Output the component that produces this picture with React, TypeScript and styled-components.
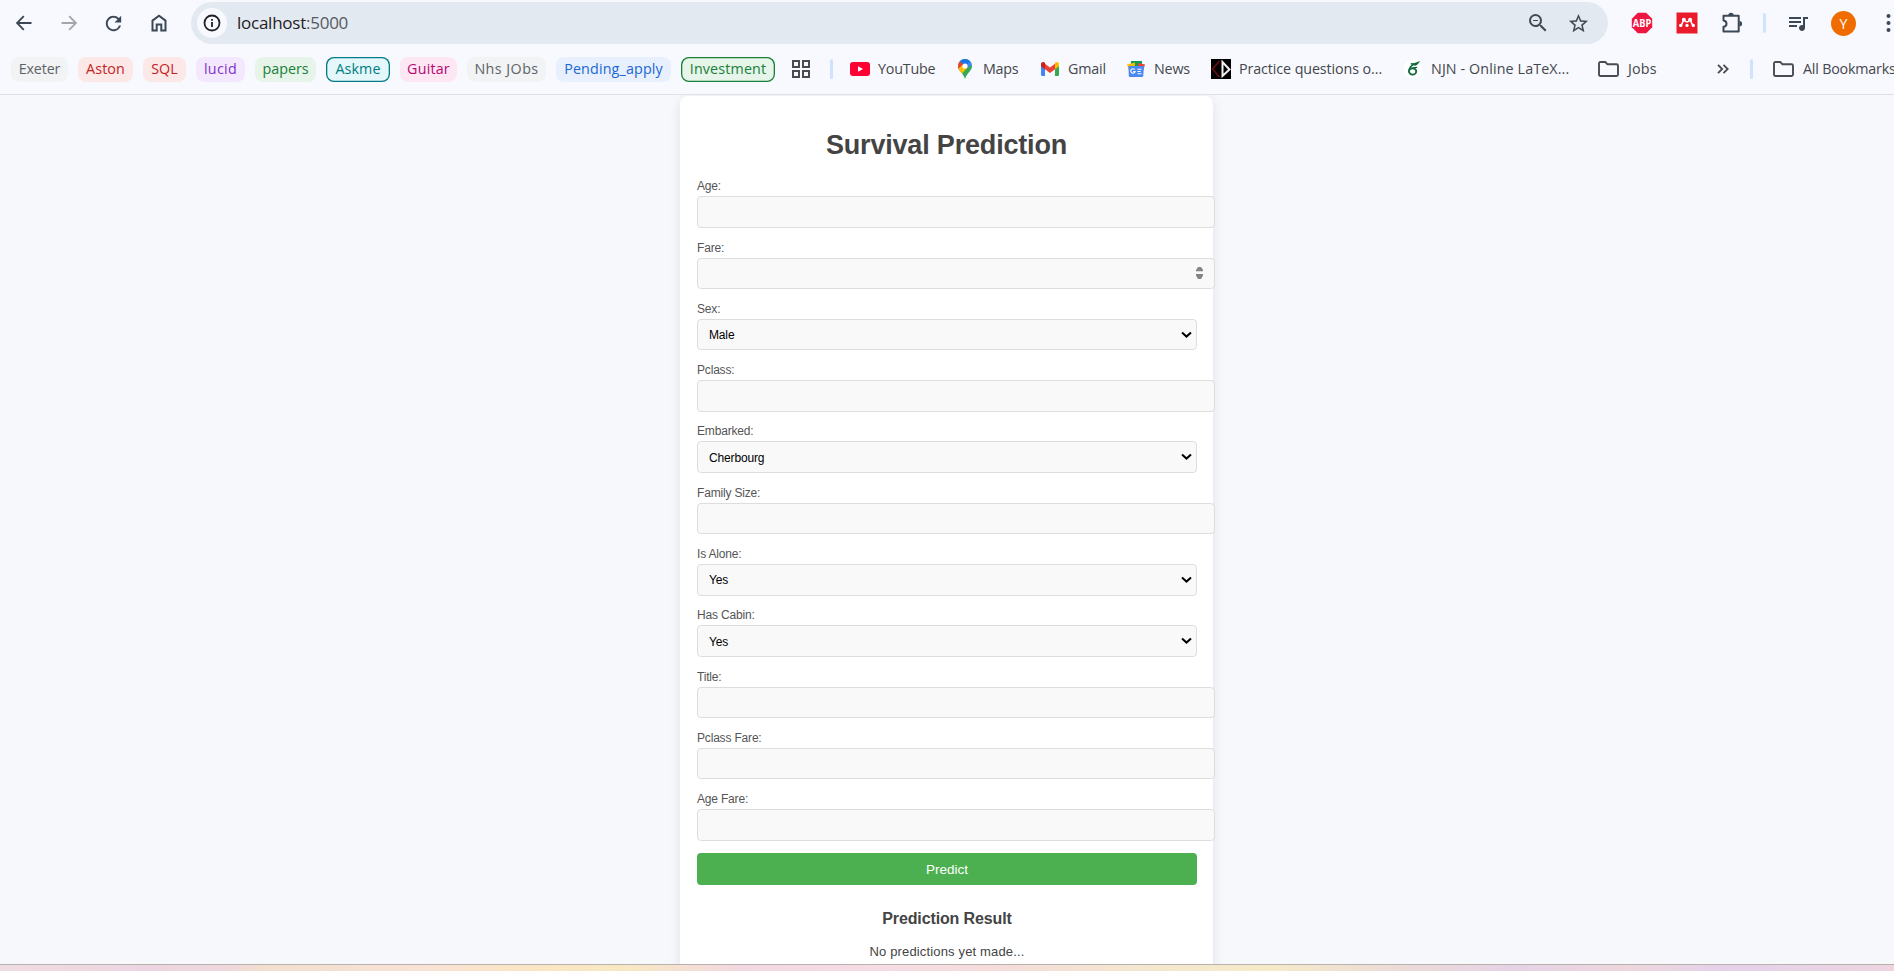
import React from "react";
import styled, { createGlobalStyle } from "styled-components";
import { MdRefresh, MdZoomOut, MdStarBorder, MdQueueMusic } from "react-icons/md";

const uiFont = `"Segoe UI", "Open Sans", "Noto Sans", sans-serif`;
const pageFont = `Arial, "Liberation Sans", sans-serif`;

const GlobalStyle = createGlobalStyle`
  *, *::before, *::after { box-sizing: border-box; }
  html, body { margin: 0; padding: 0; overflow: hidden; }
  body { background: #f6f8fc; font-family: ${pageFont}; }
`;

const Window = styled.div`
  display: flex;
  flex-direction: column;
  width: 1894px;
  height: 971px;
  overflow: hidden;
`;

const BrowserBar = styled.header`
  flex: none;
  height: 95px;
  background: #f8f9fe;
  border-bottom: 1px solid #dfe1ea;
  font-family: ${uiFont};
`;

const Toolbar = styled.div`
  display: flex;
  align-items: center;
  height: 46px;
  padding-left: 1px;
`;

const IconButton = styled.span<{ $color?: string; $width?: number }>`
  display: flex;
  flex: none;
  align-items: center;
  justify-content: center;
  width: ${(p) => p.$width ?? 45}px;
  height: 45px;
  color: ${(p) => p.$color ?? "#3c4856"};
  svg { display: block; flex: none; }
`;

const AddressBar = styled.div`
  display: flex;
  flex: none;
  align-items: center;
  width: 1417px;
  height: 42px;
  margin: 0 11px 0 10px;
  padding: 0 10px 0 6px;
  border-radius: 21px;
  background: #e3e9f1;
  color: #444950;
`;

const SiteInfo = styled.span`
  display: flex;
  align-items: center;
  justify-content: center;
  width: 30px;
  height: 30px;
  margin-right: 10px;
  border-radius: 50%;
  background: #f8f9fe;
  color: #1f2125;
`;

const Url = styled.span`
  flex: 1;
  font-size: 17px;
  line-height: 24px;
  letter-spacing: -0.25px;
  color: #1f2125;
`;

const Port = styled.span`
  color: #55595f;
`;

const AddressAction = styled.span`
  display: flex;
  justify-content: center;
  width: 40px;
`;

const Separator = styled.span`
  flex: none;
  width: 3px;
  height: 20px;
  border-radius: 1.5px;
  background: #d0e2ff;
`;

const Avatar = styled.span`
  display: flex;
  align-items: center;
  justify-content: center;
  width: 25px;
  height: 25px;
  border-radius: 50%;
  background: #f06c00;
  color: #fff;
  font-size: 14px;
`;

const BookmarkBar = styled.nav`
  display: flex;
  align-items: center;
  height: 46px;
  padding-left: 11px;
`;

const Chips = styled.div`
  display: flex;
  gap: 10px;
  flex: none;
`;

const Chip = styled.span<{ $width: number; $color: string; $bg: string; $outlined?: boolean; $track?: number }>`
  display: flex;
  align-items: center;
  justify-content: center;
  width: ${(p) => p.$width}px;
  height: 25px;
  padding-bottom: 2px;
  border-radius: 8px;
  box-shadow: inset 0 0 0 1.3px ${(p) => (p.$outlined ? p.$color : "transparent")};
  background: ${(p) => p.$bg};
  color: ${(p) => p.$color};
  font-size: 14.3px;
  font-weight: 500;
  letter-spacing: ${(p) => p.$track ?? 0.1}px;
  white-space: nowrap;
`;

const Bookmark = styled.span<{ $width: number; $track?: number; $gap?: number }>`
  display: flex;
  flex: none;
  align-items: center;
  gap: ${(p) => p.$gap ?? 8}px;
  width: ${(p) => p.$width}px;
  color: #44474b;
  font-size: 14.3px;
  letter-spacing: ${(p) => p.$track ?? -0.2}px;
  white-space: nowrap;
  svg { display: block; flex: none; }
`;

const BookmarkName = styled.span`
  padding-bottom: 2px;
`;

const BookmarkDivider = styled(Separator)`
  margin: 0 17px 0 3px;
`;

const Page = styled.main`
  flex: 1;
  min-height: 0;
  padding-top: 1px;
  overflow: hidden;
  background: #f6f8fc;
`;

const Card = styled.section`
  width: 533px;
  height: 920px;
  margin-left: 680px;
  padding: 30px 16px 0 17px;
  border-radius: 8px;
  background: #fff;
  box-shadow: 0 3px 12px rgba(30, 30, 70, 0.1);
`;

const Title = styled.h1`
  margin: 0 0 23px;
  padding-right: 1px;
  font-size: 27px;
  line-height: 38px;
  font-weight: bold;
  letter-spacing: -0.18px;
  text-align: center;
  color: #444;
`;

const Field = styled.div`
  height: 61.3px;
`;

const Label = styled.label`
  display: block;
  height: 17px;
  margin-bottom: 1px;
  font-size: 12px;
  line-height: 16.6px;
  letter-spacing: -0.18px;
  color: #555;
`;

const Form = styled.form`
  margin-top: -8.8px;
`;

const InputBox = styled.div`
  position: relative;
  width: 518px;
`;

const Input = styled.input`
  display: block;
  width: 100%;
  height: 31.6px;
  padding: 8px 12px;
  border: 1px solid #ddd;
  border-radius: 4px;
  background: #f9f9f9;
  font: 12px ${pageFont};
`;

const Select = styled.select`
  display: block;
  width: 500px;
  height: 31.6px;
  padding: 1px 7px 0 11px;
  border: 1px solid #ddd;
  border-radius: 4px;
  background: #f9f9f9;
  color: #000;
  font: 12px ${pageFont};
  letter-spacing: -0.15px;
  appearance: none;
`;

const Chevron = styled.svg`
  position: absolute;
  top: 12px;
  left: 484px;
  pointer-events: none;
`;

const Spinner = styled.svg`
  position: absolute;
  top: 8px;
  right: 11px;
`;

const PredictButton = styled.button`
  display: block;
  width: 500px;
  height: 32px;
  margin-top: 0.5px;
  padding: 1px 0 0;
  border: 0;
  border-radius: 4px;
  background: #4caf50;
  color: #fff;
  font: 13.5px ${pageFont};
`;

const ResultTitle = styled.h2`
  margin: 22px 0 0;
  font-size: 16px;
  line-height: 23px;
  letter-spacing: -0.13px;
  text-align: center;
  color: #444;
`;

const ResultText = styled.p`
  margin: 13px 0 0;
  font-size: 13px;
  line-height: 18px;
  letter-spacing: 0.15px;
  text-align: center;
  color: #444;
`;

const Desktop = styled.footer`
  flex: none;
  height: 7px;
  border-top: 1px solid #b9b1ae;
  background: linear-gradient(90deg, #f0dce4 0, #ecd5e0 8%, #eed8dd 12%, #f2dfce 14%, #f8e2d6 22%, #fae6c4 28%, #f8e8c2 33%, #f2d8e2 39%, #f6dde4 47%, #f5dcdc 52%, #f4e6cf 60%, #f5ebc9 67%, #ecdad8 74%, #e5d3e6 80%, #edd6dc 86%, #e5d2ea 91%, #e8d3e6 95%, #ecd5df 100%);
`;

const Arrow = ({ flip }: { flip?: boolean }) => (
  <svg width="16" height="16" viewBox="0 0 16 16" fill="none" stroke="currentColor" strokeWidth="1.9">
    {flip ? <path d="M.5 8H14M8.2 1.2 15 8l-6.8 6.8" /> : <path d="M15.5 8H2M7.8 1.2 1 8l6.8 6.8" />}
  </svg>
);

const HomeIcon = () => (
  <svg width="16" height="18" viewBox="0 0 16 18" fill="none" stroke="currentColor" strokeWidth="2">
    <path d="M1.5 16.5V6.6L8 1.7l6.5 4.9v9.9h-4.2v-6H5.7v6z" />
  </svg>
);

const InfoIcon = () => (
  <svg width="18" height="18" viewBox="0 0 18 18" fill="none" stroke="currentColor">
    <circle cx="9" cy="9" r="7.5" strokeWidth="1.8" />
    <path d="M9 8v5M9 5v1.8" strokeWidth="1.8" />
  </svg>
);

const AdBlockIcon = () => (
  <svg width="22" height="22" viewBox="0 0 22 22">
    <path d="M6.8.8h8.4l6 6v8.4l-6 6H6.8l-6-6V6.8z" fill="#ee1742" />
    <text x="11" y="14.6" textAnchor="middle" fill="#fff" fontFamily="Open Sans, sans-serif" fontSize="10" fontWeight="700" textLength="18.5" lengthAdjust="spacingAndGlyphs">ABP</text>
  </svg>
);

const ReaderIcon = () => (
  <svg width="22" height="22" viewBox="0 0 22 22">
    <rect x=".5" y=".5" width="21" height="21" fill="#ea1c2b" />
    <g fill="#fff">
      <circle cx="7.9" cy="7.800" r="2" />
      <circle cx="14.1" cy="7.800" r="2" />
      <circle cx="4.7" cy="13.400" r="1.700" />
      <circle cx="17.3" cy="13.400" r="1.700" />
      <circle cx="11" cy="13.400" r="1.600" />
    </g>
    <path d="M7.200 8.500c-.4 2-.9 3.600-2.200 4.700M14.800 8.500c.4 2 .9 3.600 2.200 4.700M9 8.600c.6 1 1.200 1.400 2 1.400s1.400-.4 2-1.400" stroke="#fff" strokeWidth="1.500" fill="none" />
  </svg>
);

const PuzzleIcon = () => (
  <svg width="22" height="22" viewBox="0 0 22 22">
    <path d="M2.5 3.8h15.2v15.7H2.5v-4.7c1.9-.2 3-1.5 3-3.1s-1.1-2.9-3-3.1z" fill="none" stroke="currentColor" strokeWidth="2" strokeLinejoin="round" />
    <path d="M7.3 3.4a2.7 2.7 0 0 1 5.4 0zM18.4 9a2.7 2.7 0 0 1 0 5.4z" fill="currentColor" />
  </svg>
);

const DotsIcon = () => (
  <svg width="5" height="20" viewBox="0 0 5 20" fill="currentColor">
    <circle cx="2.5" cy="3" r="2" />
    <circle cx="2.5" cy="10" r="2" />
    <circle cx="2.5" cy="17" r="2" />
  </svg>
);

const AppsIcon = () => (
  <svg width="18" height="18" viewBox="0 0 18 18" fill="none" stroke="#484b50" strokeWidth="2">
    <path d="M1 1h6v6H1zM11 1h6v6h-6zM1 11h6v6H1zM11 11h6v6h-6z" />
  </svg>
);

const YouTubeIcon = () => (
  <svg width="20" height="20" viewBox="0 0 20 20">
    <rect y="3" width="20" height="14" rx="3" fill="#ff0033" />
    <path d="M8 7.2v5.6l5-2.8z" fill="#fff" />
  </svg>
);

const MapsIcon = () => (
  <svg width="20" height="20" viewBox="0 0 20 20">
    <clipPath id="pin"><path d="M10 0a7 7 0 0 1 7 7c0 5-5 6.500-7 13C8 13.500 3 12 3 7a7 7 0 0 1 7-7z" /></clipPath>
    <g clipPath="url(#pin)">
      <path d="M0 0h20v20H0z" fill="#34a853" />
      <path d="M4 0h13l-5 7H9.800L5 2.400z" fill="#1a73e8" />
      <path d="M17 1 9.800 7l2 2.600L18 5z" fill="#4285f4" />
      <path d="M2 9V4l2.400-2L10 7l-5 4.800z" fill="#ea4335" />
      <path d="M2 10.800 7.500 6l5 2.600-7 7.800z" fill="#fbbc04" />
    </g>
    <circle cx="10" cy="7" r="2.600" fill="#fff" />
  </svg>
);

const GmailIcon = () => (
  <svg width="20" height="20" viewBox="0 0 20 20">
    <path d="M1 5.500v10.200c0 .7.500 1.200 1.200 1.200H5V9z" fill="#4285f4" />
    <path d="M19 5.500v10.200c0 .7-.5 1.200-1.200 1.200H15V9z" fill="#34a853" />
    <path d="M5 4.800 10 8.600l5-3.800v5.400L10 14l-5-3.800z" fill="#ea4335" />
    <path d="M1 5.300C1 3.300 3.200 2.500 4.600 3.600l.4.300v6.300L1 7.200z" fill="#c5221f" />
    <path d="M19 5.300c0-2-2.200-2.800-3.600-1.700l-.4.300v6.300l4-3z" fill="#fbbc04" />
  </svg>
);

const NewsIcon = () => (
  <svg width="20" height="20" viewBox="0 0 20 20">
    <path d="M5 2h11v8H5z" fill="#0f9d58" />
    <path d="m1 5.500 8-2v8H3z" fill="#fbbc04" />
    <path d="m19 5.500-7-1.500v8h5z" fill="#ea4335" />
    <path d="M2.500 7h15.500l-.8 10.200a1 1 0 0 1-1 .8H3.800a1 1 0 0 1-1-.8z" fill="#4a88f4" />
    <path d="M8.700 10.600a2.200 2.200 0 1 0 .4 1.900H7.200M11.500 10.300h4M11.500 12.500h3.200M11.500 14.700h4" stroke="#fff" strokeWidth="1.100" fill="none" />
  </svg>
);

const PracticeIcon = () => (
  <svg width="20" height="20" viewBox="0 0 20 20" fill="none">
    <path d="M0 0h20v20H0z" fill="#000" />
    <path d="M8.500 2 1.500 10l7 8" stroke="#6e0d10" strokeWidth="1.600" />
    <path d="M11.500 3v14l7-6.500z" stroke="#f2f2f2" strokeWidth="2" />
  </svg>
);

const OverleafIcon = () => (
  <svg width="20" height="20" viewBox="0 0 20 20" fill="none">
    <circle cx="10" cy="10" r="9.700" fill="#fff" />
    <ellipse cx="9.600" cy="12.400" rx="3.600" ry="3.200" stroke="#13693b" strokeWidth="1.900" />
    <path d="M6 12.500c0-3.500 2-6 5.500-7.500M7.800 4.700c2 .3 4.600.2 7.600-1.200-.8 1.500-2.400 2.400-4 2.800M9.500 9.600c1.500-1 3-1.300 4.500-1.200" stroke="#13693b" strokeWidth="1.400" />
  </svg>
);

const FolderIcon = () => (
  <svg width="21" height="16" viewBox="0 0 21 16" fill="none" stroke="#484b50" strokeWidth="1.900">
    <path d="M1 2.500C1 1.600 1.600 1 2.500 1h4.800l2.200 2.300h9c.9 0 1.500.6 1.500 1.500v8.700c0 .9-.6 1.500-1.500 1.500h-16c-.9 0-1.500-.6-1.500-1.500z" />
  </svg>
);

const OverflowIcon = () => (
  <svg width="12" height="10" viewBox="0 0 12 10" fill="none" stroke="#484b50" strokeWidth="1.800">
    <path d="m1 .8 4.200 4.200L1 9.200M6.500.8 10.700 5 6.500 9.200" />
  </svg>
);

const chips = [
  { name: "Exeter", width: 57, color: "#5f6368", bg: "#f1f3f4", track: -0.15 },
  { name: "Aston", width: 55, color: "#c5221f", bg: "#fce8e6" },
  { name: "SQL", width: 43, color: "#c5221f", bg: "#fce8e6", track: 0 },
  { name: "lucid", width: 49, color: "#8430ce", bg: "#f3e8fd", track: 0.3 },
  { name: "papers", width: 61, color: "#188038", bg: "#e6f4ea", track: 0 },
  { name: "Askme", width: 64, color: "#007b83", bg: "#e4f7fb", outlined: true },
  { name: "Guitar", width: 57, color: "#b80672", bg: "#fde7f3", track: 0.2 },
  { name: "Nhs JObs", width: 79, color: "#5f6368", bg: "#f1f3f4", track: 0.45 },
  { name: "Pending_apply", width: 115, color: "#1967d2", bg: "#e8f0fe", track: 0.15 },
  { name: "Investment", width: 94, color: "#188038", bg: "#e6f4ea", outlined: true, track: 0.15 },
];

const bookmarks = [
  { name: "YouTube", width: 105, track: -0.2, icon: <YouTubeIcon /> },
  { name: "Maps", width: 85, track: -0.3, icon: <MapsIcon /> },
  { name: "Gmail", width: 86, track: -0.2, icon: <GmailIcon /> },
  { name: "News", width: 85, track: -0.2, icon: <NewsIcon /> },
  { name: "Practice questions o...", width: 192, track: -0.1, icon: <PracticeIcon /> },
  { name: "NJN - Online LaTeX...", width: 195, track: 0.12, icon: <OverleafIcon /> },
  { name: "Jobs", width: 119, track: 0.2, gap: 9, icon: <FolderIcon /> },
];

type FieldSpec = { label: string; kind?: "select" | "number"; value?: string };

const fields: FieldSpec[] = [
  { label: "Age:" },
  { label: "Fare:", kind: "number" },
  { label: "Sex:", kind: "select", value: "Male" },
  { label: "Pclass:" },
  { label: "Embarked:", kind: "select", value: "Cherbourg" },
  { label: "Family Size:" },
  { label: "Is Alone:", kind: "select", value: "Yes" },
  { label: "Has Cabin:", kind: "select", value: "Yes" },
  { label: "Title:" },
  { label: "Pclass Fare:" },
  { label: "Age Fare:" },
];

const FormField = ({ label, kind, value }: FieldSpec) => (
  <Field>
    <Label>{label}</Label>
    <InputBox>
      {kind === "select" ? (
        <>
          <Select defaultValue={value}>
            <option>{value}</option>
          </Select>
          <Chevron width="11" height="8" viewBox="0 0 11 8" fill="none" stroke="#000" strokeWidth="2">
            <path d="M1 1.500 5.500 5.600 10 1.500" />
          </Chevron>
        </>
      ) : (
        <Input />
      )}
      {kind === "number" && (
        <Spinner width="9" height="14" viewBox="0 0 9 14" fill="#858585">
          <path d="M1 5.300V4L3 1h3l2 3v1.300zM1 8h7v1.500L6 13H3L1 9.500z" />
        </Spinner>
      )}
    </InputBox>
  </Field>
);

export default function App() {
  return (
    <Window>
      <GlobalStyle />
      <BrowserBar>
        <Toolbar>
          <IconButton><Arrow /></IconButton>
          <IconButton $color="#a3a7ad"><Arrow flip /></IconButton>
          <IconButton><MdRefresh size={23} /></IconButton>
          <IconButton><HomeIcon /></IconButton>
          <AddressBar>
            <SiteInfo><InfoIcon /></SiteInfo>
            <Url>localhost<Port>:5000</Port></Url>
            <AddressAction><MdZoomOut size={24} /></AddressAction>
            <AddressAction><MdStarBorder size={23} /></AddressAction>
          </AddressBar>
          <IconButton><AdBlockIcon /></IconButton>
          <IconButton><ReaderIcon /></IconButton>
          <IconButton><PuzzleIcon /></IconButton>
          <IconButton $width={20}><Separator /></IconButton>
          <IconButton $width={47}><MdQueueMusic size={24} /></IconButton>
          <IconButton><Avatar>Y</Avatar></IconButton>
          <IconButton><DotsIcon /></IconButton>
        </Toolbar>
        <BookmarkBar>
          <Chips>
            {chips.map((c) => (
              <Chip key={c.name} $width={c.width} $color={c.color} $bg={c.bg} $outlined={c.outlined} $track={c.track}>{c.name}</Chip>
            ))}
          </Chips>
          <IconButton $width={52}><AppsIcon /></IconButton>
          <BookmarkDivider />
          {bookmarks.map((b) => (
            <Bookmark key={b.name} $width={b.width} $track={b.track} $gap={b.gap}>{b.icon}<BookmarkName>{b.name}</BookmarkName></Bookmark>
          ))}
          <IconButton $width={12}><OverflowIcon /></IconButton>
          <IconButton $width={44}><Separator /></IconButton>
          <Bookmark $width={130} $gap={9}><FolderIcon /><BookmarkName>All Bookmarks</BookmarkName></Bookmark>
        </BookmarkBar>
      </BrowserBar>
      <Page>
        <Card>
          <Title>Survival Prediction</Title>
          <Form>
            {fields.map((f) => <FormField key={f.label} {...f} />)}
            <PredictButton type="button">Predict</PredictButton>
          </Form>
          <ResultTitle>Prediction Result</ResultTitle>
          <ResultText>No predictions yet made...</ResultText>
        </Card>
      </Page>
      <Desktop />
    </Window>
  );
}
